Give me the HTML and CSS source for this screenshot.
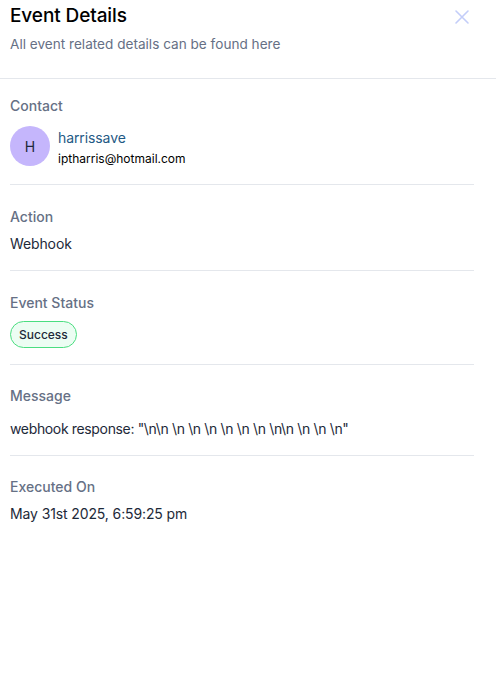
FILE: index.html
```html
<!DOCTYPE html>
<html>
<head>
<meta charset="utf-8">
<link rel="stylesheet" href="styles.css">
</head>
<body>
<div class="panel">
  <header class="header">
    <div class="header-text">
      <h1 class="title">Event Details</h1>
      <p class="subtitle">All event related details can be found here</p>
    </div>
    <button class="close" aria-label="Close">
      <svg width="16" height="16" viewBox="0 0 16 16" fill="none" stroke="#c3cdf9" stroke-width="1.6" stroke-linecap="round"><path d="M2 2L14 14M14 2L2 14"/></svg>
    </button>
  </header>
  <div class="body">
    <section class="section section-first">
      <div class="label">Contact</div>
      <div class="contact">
        <div class="avatar">H</div>
        <div class="contact-info">
          <div class="contact-name">harrissave</div>
          <div class="contact-email">iptharris@hotmail.com</div>
        </div>
      </div>
    </section>
    <section class="section">
      <div class="label">Action</div>
      <div class="value">Webhook</div>
    </section>
    <section class="section section-status">
      <div class="label label-status">Event Status</div>
      <span class="badge">Success</span>
    </section>
    <section class="section section-message">
      <div class="label">Message</div>
      <div class="value value-message">webhook response: "\n\n \n \n \n \n \n \n \n\n \n \n \n"</div>
    </section>
    <section class="section section-last">
      <div class="label">Executed On</div>
      <div class="value value-date">May 31st 2025, 6:59:25 pm</div>
    </section>
  </div>
</div>
</body>
</html>
```
FILE: styles.css
```css
* { box-sizing: border-box; }
html, body { margin: 0; padding: 0; background: #fff; }
body {
  font-family: Inter, "Noto Sans", sans-serif;
  color: #101828;
  width: 496px;
  height: 695px;
  overflow: hidden;
}
.header {
  display: flex;
  justify-content: space-between;
  align-items: flex-start;
  padding: 2px 26px 24px 10px;
  border-bottom: 1px solid #e4e7ec;
}
.title {
  margin: 0;
  font-size: 19px;
  line-height: 28px;
  font-weight: 500;
  color: #000;
  letter-spacing: -0.1px;
}
.subtitle {
  margin: 4px 0 0;
  font-size: 13.6px;
  line-height: 20px;
  color: #667085;
}
.close {
  background: none;
  border: 0;
  padding: 0;
  margin-top: 7px;
  width: 16px;
  height: 16px;
  display: flex;
}
.body {
  padding: 0 22px 0 10px;
}
.section {
  padding: 22px 0 16px;
  border-bottom: 1px solid #e4e7ec;
}
.section-first { padding: 17px 0 16px; }
.section-message { padding-top: 21px; }
.section-last { padding-top: 21px; border-bottom: 0; }
.label {
  font-size: 14px;
  line-height: 20px;
  font-weight: 500;
  color: #667085;
  margin-bottom: 7px;
}
.section-first .label { margin-bottom: 10px; }
.label-status { margin-bottom: 8px; }
.value {
  font-size: 14px;
  line-height: 20px;
  color: #1d2939;
  letter-spacing: -0.12px;
}
.section-message .label { margin-bottom: 13px; }
.value-message { letter-spacing: -0.35px; }
.value-date { margin-top: 1px; }
.contact {
  display: flex;
  align-items: flex-start;
  gap: 8px;
}
.avatar {
  width: 40px;
  height: 40px;
  border-radius: 50%;
  background: #c5b6fc;
  color: #1d2939;
  font-size: 14px;
  display: flex;
  align-items: center;
  justify-content: center;
  flex-shrink: 0;
}
.contact-info {
  display: flex;
  flex-direction: column;
  gap: 2px;
  margin-top: 2px;
}
.contact-name {
  font-size: 14px;
  line-height: 20px;
  color: #1f5a85;
  letter-spacing: -0.1px;
}
.contact-email {
  font-size: 12px;
  line-height: 18px;
  color: #000;
}
.badge {
  display: inline-flex;
  align-items: center;
  height: 27px;
  padding: 0 8px;
  border: 1px solid #4ade80;
  border-radius: 14px;
  background: #ecfdf3;
  font-size: 12px;
  font-weight: 500;
  color: #1d2939;
  vertical-align: top;
}
```
